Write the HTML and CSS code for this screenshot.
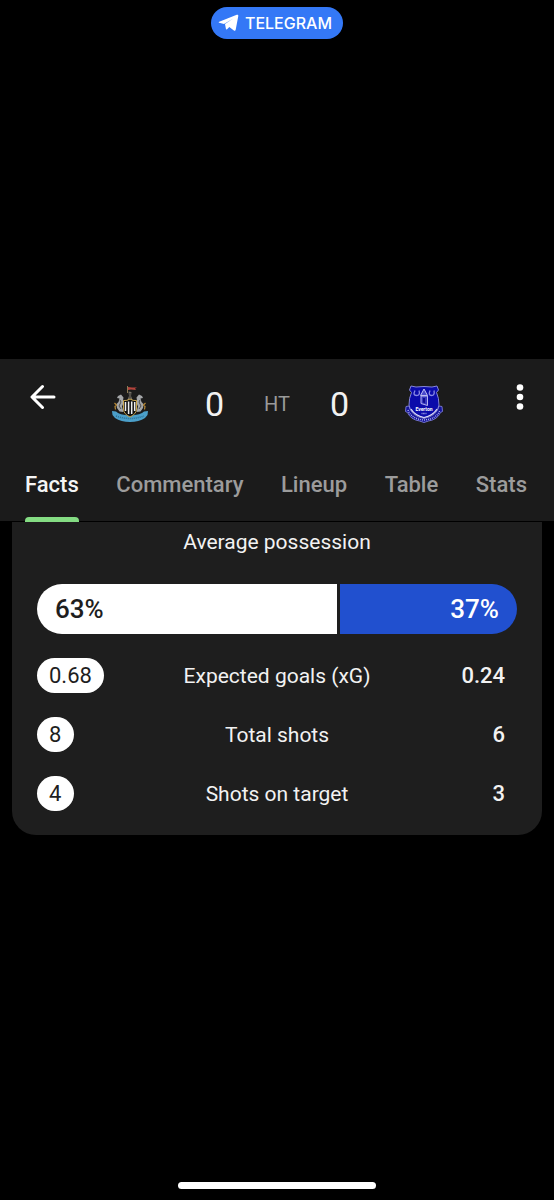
FILE: index.html
```html
<!DOCTYPE html>
<html lang="en">
<head>
  <meta charset="UTF-8" />
  <meta name="viewport" content="width=device-width, initial-scale=1.0"/>
  <title>Newcastle United – Everton</title>
  <link rel="stylesheet" href="styles.css">
</head>
<body>
  <div class="status-bar">
    <a href="#" class="app-pill">
      <svg width="22" height="18" viewBox="0 0 22 18" aria-hidden="true">
        <path d="M1.200 7.800 18.800.8c1-.4 1.700.2 1.500 1.300l-2.600 13.600c-.2 1-1 1.300-1.800.7l-4.600-3.300-2.200 2.100c-.5.5-1 .3-1.200-.4l-.9-4.800L15.200 4.600 6 9.900 1.200 8.700c-.7-.2-.7-.6 0-.9z" fill="#fff"/>
      </svg>
      <span>TELEGRAM</span>
    </a>
  </div>

  <header class="header">
    <div class="topbar">
      <button class="icon-button" aria-label="Back">
        <svg width="26" height="26" viewBox="0 0 26 26">
          <path d="M24 13H2.500M12.500 2.500 2 13l10.500 10.500" fill="none" stroke="#fff" stroke-width="3" stroke-linecap="round" stroke-linejoin="round"/>
        </svg>
      </button>

      <div class="match">
        <svg class="crest" viewBox="0 0 38 38" role="img" aria-label="Newcastle United">
          <path d="M16.500 8V1" stroke="#8d7c55" stroke-width="1"/>
          <path d="M17 2l4 .5 5 0-2 1 1 1.500-5-.5-3 .5z" fill="#b5443c"/>
          <path d="M17.500 6.500l3 .5-.5 4 1.500 4h-5l1.500-4z" fill="#77736a"/>
          <path d="M19 8v6" stroke="#302d29" stroke-width="1"/>
          <!-- seahorses -->
          <path d="M12.500 12.500 10 9.500 7 11l-1 2 2.500.5-1 3.500L5.500 19 6 23l2.500 3.500 4 .5-1.500-5.500 1.500-3.500-.5-2.500z" fill="#a4a6a8"/>
          <path d="M25.500 12.500 28 9.500l3 1.500 1 2-2.500.5 1 3.500 2 2-.5 4-2.500 3.500-4 .5 1.500-5.500-1.500-3.500.5-2.500z" fill="#a4a6a8"/>
          <path d="M3.500 18l2 2-1.500 1.500.5 3M34.500 18l-2 2 1.500 1.500-.5 3" fill="none" stroke="#b98a36" stroke-width="1.200"/>
          <path d="M9 15l1 2-2 4 2 3M29 15l-1 2 2 4-2 3" fill="none" stroke="#4d4e4f" stroke-width="1"/>
          <!-- ribbon -->
          <path d="M1 26l4 .5q3 3.500 14 4 11-.5 14-4l4-.5-.5 4-2.500 3q-6 4-15 4t-15-4l-2.500-3z" fill="#4b9fc9"/>
          <path d="M5 31q14 5 28 0" fill="none" stroke="#2b6e93" stroke-width="1.500" stroke-dasharray="1 1"/>
          <!-- shield -->
          <path d="M12.500 15.500q3.500.5 6.500-1.500 3 2 6.500 1.500v8.500q0 5-6.500 8-6.500-3-6.500-8z" fill="#111" stroke="#c9a64e" stroke-width="1"/>
          <path d="M14.500 17v9M17.600 16.500v12.500M20.700 16.500v12.500M23.700 17v9" stroke="#eee" stroke-width="1.500"/>
        </svg>
        <span class="score">0</span>
        <span class="period">HT</span>
        <span class="score">0</span>
        <svg class="crest" viewBox="0 0 38 38" role="img" aria-label="Everton">
          <path d="M1 21.500l3-.5q2 10 15 12.500Q32 31 34 21l3 .5.500 5-2 1q-3 7-12 8.500l-4.500 1.500-4.500-1.500q-9-1.500-12-8.500l-2-1z" fill="#13139b" stroke="#7373ca" stroke-width="1"/>
          <path d="M3 25q3 9 16 10 13-1 16-10" fill="none" stroke="#a9a9e8" stroke-width="1.500" stroke-dasharray="1 1"/>
          <path d="M6 1l5 1 8-.5 8 .5 5-1 1.500 4-2 2.500Q34 13 34 20q-1 9-15 13Q5 29 4 20q0-7 2.500-12.500l-2-2.500z" fill="#0b0baa" stroke="#8585da" stroke-width="1"/>
          <path d="M6 24q4 6.500 13 8.500 9-2 13-8.500" fill="none" stroke="#dadafa" stroke-width="1.200"/>
          <path d="M10 5.500q-2.500 5 1.500 5t2.500-5M25 5.500q-2 5 1.500 5t2.500-5" fill="none" stroke="#8989e4" stroke-width="1.300"/>
          <!-- tower -->
          <path d="M19 4l-3.500 6.500h7z" fill="#4a4acb" stroke="#c1c1f2" stroke-width="1"/>
          <path d="M16 11v7.500l6.500 2V11z" fill="#3636bd" stroke="#b4b4ee" stroke-width="1"/>
          <path d="M18 13h2v5l-2-.5z" fill="#0b0b8f"/>
          <text class="crest-name" x="19" y="26" text-anchor="middle">Everton</text>
          <path d="M16.500 28.500h5" stroke="#9292df" stroke-width="1.500" stroke-dasharray="1 .4"/>
        </svg>
      </div>

      <button class="icon-button" aria-label="More options">
        <svg width="8" height="26" viewBox="0 0 8 26">
          <circle cx="4" cy="3.500" r="3.300" fill="#fff"/>
          <circle cx="4" cy="13" r="3.300" fill="#fff"/>
          <circle cx="4" cy="22.500" r="3.300" fill="#fff"/>
        </svg>
      </button>
    </div>

    <nav class="tabs">
      <a href="#" class="tab active">Facts</a>
      <a href="#" class="tab">Commentary</a>
      <a href="#" class="tab">Lineup</a>
      <a href="#" class="tab">Table</a>
      <a href="#" class="tab">Stats</a>
    </nav>
  </header>

  <main class="card">
    <h2>Average possession</h2>

    <div class="possession">
      <div class="home" style="width:63%">63%</div>
      <div class="away" style="width:37%">37%</div>
    </div>

    <table class="stats">
      <tr>
        <td><span class="value">0.68</span></td>
        <th scope="row">Expected goals (xG)</th>
        <td>0.24</td>
      </tr>
      <tr>
        <td><span class="value">8</span></td>
        <th scope="row">Total shots</th>
        <td>6</td>
      </tr>
      <tr>
        <td><span class="value">4</span></td>
        <th scope="row">Shots on target</th>
        <td>3</td>
      </tr>
    </table>
  </main>

  <div class="home-indicator"></div>
</body>
</html>
```

FILE: styles.css
```css
* { box-sizing: border-box; }

body {
  margin: 0;
  min-height: 100vh;
  display: flex;
  flex-direction: column;
  font-family: Roboto, Arial, sans-serif;
  font-size: 22px;
  line-height: 26px;
  color: #f2f2f2;
  background: #000;
}

a {
  color: inherit;
  text-decoration: none;
}

.status-bar {
  padding-top: 7px;
  min-height: 359px;
  display: flex;
  justify-content: center;
  align-items: flex-start;
}

.app-pill {
  display: flex;
  align-items: center;
  gap: 5px;
  height: 32px;
  padding: 0 11px 0 7px;
  border-radius: 16px;
  background: #3478f6;
  color: white;
  font-family: Inter, Arial, sans-serif;
  font-size: 16px;
  font-weight: 500;
}

.header {
  padding-top: 16px;
  background: #1b1b1b;
}

.topbar {
  display: flex;
  justify-content: space-between;
  padding: 0 12px;
}

.icon-button {
  display: flex;
  align-items: center;
  justify-content: center;
  width: 44px;
  height: 44px;
  margin: 0;
  padding: 0;
  border: none;
  background: none;
  cursor: pointer;
}

.topbar .icon-button:first-child {
  justify-content: flex-end;
}

.match {
  display: flex;
  align-items: center;
  gap: 40px;
  height: 58px;
}

.crest {
  width: 38px;
  height: 38px;
}

.crest:first-child { margin-right: 16px; }
.crest:last-child { margin-left: 16px; }

.crest-name {
  font-size: 5px;
  font-weight: bold;
  fill: white;
}

.score {
  font-size: 34px;
  line-height: 40px;
}

.period {
  font-size: 20px;
  color: #9a9a9a;
}

.tabs {
  display: flex;
  justify-content: space-between;
  margin-top: 16px;
  padding: 0 27px 0 25px;
}

.tab {
  position: relative;
  line-height: 72px;
  font-weight: 500;
  color: #9c9c9c;
}

.tab.active { color: #f5f5f5; }

.tab.active::after {
  content: "";
  position: absolute;
  left: 0;
  right: 0;
  bottom: -1px;
  height: 5px;
  border-radius: 4px 4px 0 0;
  background: #84dc83;
}

.card {
  margin: 1px 12px 24px;
  padding: 7px 25px 24px;
  border-radius: 0 0 24px 24px;
  background: #1e1e1e;
}

.card h2 {
  margin: 0;
  font-size: 21px;
  font-weight: 400;
  text-align: center;
}

.possession {
  display: flex;
  gap: 3px;
  margin: 29px 0 24px;
  border-radius: 25px;
  overflow: hidden;
  font-size: 26px;
  font-weight: 500;
  line-height: 50px;
}

.possession div { padding: 0 18px; }

.possession .home {
  background: white;
  color: #1e1e1e;
}

.possession .away {
  background: #2150cf;
  color: white;
  text-align: right;
}

.stats {
  width: 100%;
  table-layout: fixed;
  border-collapse: collapse;
}

.stats td,
.stats th {
  height: 59px;
  padding: 0 0 24px;
  font-weight: 400;
}

.stats tr:last-child td,
.stats tr:last-child th {
  height: 35px;
  padding-bottom: 0;
}

.stats th {
  width: 50%;
  font-size: 21px;
}

.stats td:last-child {
  padding-right: 12px;
  text-align: right;
  font-weight: 500;
}

.value {
  display: block;
  width: fit-content;
  min-width: 37px;
  padding: 0 12px;
  border-radius: 18px;
  background: white;
  color: #1e1e1e;
  line-height: 35px;
}

.home-indicator {
  width: 198px;
  height: 7px;
  margin: auto auto 11px;
  border-radius: 4px;
  background: white;
}
```
